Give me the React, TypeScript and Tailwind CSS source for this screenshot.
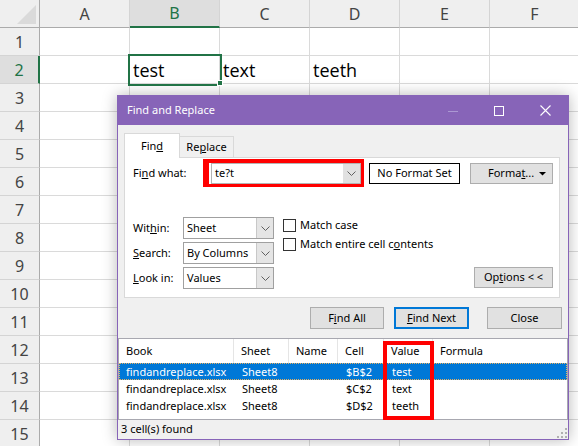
import React from 'react';

const COLS = ['A', 'B', 'C', 'D', 'E', 'F'];
const ROWS = Array.from({ length: 15 }, (_, i) => i + 1);
const DATA: Record<string, string> = { B2: 'test', C2: 'text', D2: 'teeth' };

function Chevron() {
  return (
    <svg width="9" height="5" viewBox="0 0 9 5">
      <polyline points="0.5,0.5 4.5,4.5 8.5,0.5" fill="none" stroke="#606060" strokeWidth="1" />
    </svg>
  );
}

function Select({ value }: { value: string }) {
  return (
    <div className="flex h-[22px] w-[91px] border border-[#a0a0a0] bg-white">
      <div className="flex flex-1 items-center pl-[3px]">{value}</div>
      <div className="flex w-[17px] items-center justify-center border-l border-[#c8c8c8] bg-[#e5e5e5]">
        <Chevron />
      </div>
    </div>
  );
}

function Btn({ children, w, focus }: { children: React.ReactNode; w: string; focus?: boolean }) {
  return (
    <div
      className={`flex h-[22px] items-center justify-center bg-[#e1e1e1] ${w} ${
        focus ? 'border-2 border-[#0078d7]' : 'border border-[#adadad]'
      }`}
    >
      {children}
    </div>
  );
}

function Checkbox({ label }: { label: React.ReactNode }) {
  return (
    <div className="flex h-[13px] items-center">
      <div className="h-[13px] w-[13px] border border-[#333333] bg-white" />
      <div className="ml-[4px]">{label}</div>
    </div>
  );
}

const resultRows = [
  { book: 'findandreplace.xlsx', sheet: 'Sheet8', cell: '$B$2', value: 'test' },
  { book: 'findandreplace.xlsx', sheet: 'Sheet8', cell: '$C$2', value: 'text' },
  { book: 'findandreplace.xlsx', sheet: 'Sheet8', cell: '$D$2', value: 'teeth' },
];

function Dialog() {
  return (
    <div className="absolute left-[117px] top-[95px] flex h-[345px] w-[452px] flex-col border border-[#8764b8] bg-[#f0f0f0] text-[11px] text-black shadow-[0_0_14px_rgba(0,0,0,0.28)] font-['Noto_Sans',sans-serif]">
      {/* title bar */}
      <div className="flex h-[29px] shrink-0 items-center bg-[#8764b8]">
        <div className="pl-[9px] text-[11px] text-white">Find and Replace</div>
        <div className="ml-auto flex h-full">
          <div className="flex w-[46px] items-center justify-center">
            <div className="mt-[1px] h-[1px] w-[10px] bg-[#ab98d3]" />
          </div>
          <div className="flex w-[46px] items-center justify-center">
            <div className="h-[10px] w-[10px] border border-white" />
          </div>
          <div className="flex w-[46px] items-center justify-center">
            <svg width="11" height="11" viewBox="0 0 11 11">
              <path d="M0.5 0.5 L10.5 10.5 M10.5 0.5 L0.5 10.5" stroke="white" strokeWidth="1.1" />
            </svg>
          </div>
        </div>
      </div>

      {/* body */}
      <div className="flex flex-1 flex-col">
        {/* tabs */}
        <div className="ml-[6px] mt-[8px] flex h-[25px] items-end">
          <div className="relative z-10 flex h-[25px] w-[56px] items-center justify-center border-l border-r border-t border-[#d9d9d9] bg-white">
            Fin<span className="underline">d</span>
          </div>
          <div className="flex h-[22px] w-[54px] items-center justify-center border-r border-t border-[#d9d9d9] bg-[#f0f0f0]">
            Re<span className="underline">p</span>lace
          </div>
        </div>

        {/* panel */}
        <div className="-mt-[1px] ml-[6px] flex h-[141px] w-[436px] flex-col border border-[#d9d9d9] bg-white pl-[8px] pr-[6px]">
          <div className="mt-[1px] flex h-[28px] items-center">
            <div className="w-[70px]">
              Fi<span className="underline">n</span>d what:
            </div>
            <div className="flex h-[28px] w-[161px] border-b-[3px] border-l-[6px] border-r-[3px] border-t-[4px] border-[#ff0000] bg-white pl-[2px]">
              <div className="flex flex-1 border border-[#b4b4b4]">
                <div className="flex flex-1 items-center pl-[3px]">te?t</div>
                <div className="flex w-[17px] items-center justify-center bg-[#e1e1e1]">
                  <Chevron />
                </div>
              </div>
            </div>
            <div className="ml-[5px] flex h-[21px] w-[91px] items-center justify-center border border-black bg-white">
              No Format Set
            </div>
            <div className="relative ml-[10px] flex h-[21px] w-[83px] items-center border border-[#adadad] bg-[#e1e1e1] pl-[17px]">
              Forma<span className="underline">t</span>...
              <svg className="absolute right-[6px] top-[8px]" width="7" height="4" viewBox="0 0 7 4">
                <polygon points="0,0 7,0 3.5,3.5" fill="#000" />
              </svg>
            </div>
          </div>

          <div className="mt-[30px] flex">
            <div className="flex flex-col gap-[3px]">
              <div className="flex h-[22px] items-center">
                <div className="w-[50px]">
                  Wit<span className="underline">h</span>in:
                </div>
                <Select value="Sheet" />
              </div>
              <div className="flex h-[22px] items-center">
                <div className="w-[50px]">
                  <span className="underline">S</span>earch:
                </div>
                <Select value="By Columns" />
              </div>
              <div className="flex h-[22px] items-center">
                <div className="w-[50px]">
                  <span className="underline">L</span>ook in:
                </div>
                <Select value="Values" />
              </div>
            </div>
            <div className="ml-[9px] mt-[2px] flex flex-col gap-[6px]">
              <Checkbox label={<>Match case</>} />
              <Checkbox
                label={
                  <>
                    Match entire cell c<span className="underline">o</span>ntents
                  </>
                }
              />
            </div>
            <div className="mb-[1px] ml-auto self-end">
              <div className="flex h-[21px] w-[79px] items-center justify-center border border-[#adadad] bg-[#e1e1e1]">
                Op<span className="underline">t</span>ions &lt; &lt;
              </div>
            </div>
          </div>
        </div>

        {/* buttons */}
        <div className="mt-[9px] flex justify-end pr-[6px]">
          <Btn w="w-[74px]">
            F<span className="underline">i</span>nd All
          </Btn>
          <div className="ml-[10px]">
            <Btn w="w-[75px]" focus>
              <span className="underline">F</span>ind Next
            </Btn>
          </div>
          <div className="ml-[18px]">
            <Btn w="w-[75px]">Close</Btn>
          </div>
        </div>

        {/* results list */}
        <div className="relative mt-[9px] h-[82px] border border-[#a8a8b0] bg-white">
          <div className="grid h-[24px] grid-cols-[115px_55px_49px_46px_49px_1fr]">
            {['Book', 'Sheet', 'Name', 'Cell', 'Value', 'Formula'].map((h, i) => (
              <div
                key={h}
                className={`flex items-center pl-[7px] ${i < 5 ? 'border-r border-[#e5e5e5]' : ''}`}
              >
                {h}
              </div>
            ))}
          </div>
          {resultRows.map((r, i) => (
            <div
              key={r.cell}
              className={`grid h-[17px] grid-cols-[115px_55px_49px_46px_49px_1fr] ${
                i === 0 ? 'border border-dotted border-[#e8b060] bg-[#0078d7] text-white' : 'border border-transparent'
              }`}
            >
              <div className="flex items-center pl-[6px]">{r.book}</div>
              <div className="flex items-center pl-[7px]">{r.sheet}</div>
              <div className="flex items-center pl-[7px]" />
              <div className="flex items-center pl-[7px]">{r.cell}</div>
              <div className="flex items-center pl-[7px]">{r.value}</div>
              <div />
            </div>
          ))}
          <div className="absolute left-[264px] top-[2px] h-[79px] w-[51px] border-4 border-[#ff0000]" />
        </div>

        {/* status bar */}
        <div className="relative flex flex-1 items-center pl-[3px]">
          3 cell(s) found
          <svg className="absolute bottom-[1px] right-[1px]" width="10" height="10" viewBox="0 0 10 10">
            <rect x="8" y="0" width="2" height="2" fill="#b0b0b0" />
            <rect x="4" y="4" width="2" height="2" fill="#b0b0b0" />
            <rect x="8" y="4" width="2" height="2" fill="#b0b0b0" />
            <rect x="0" y="8" width="2" height="2" fill="#b0b0b0" />
            <rect x="4" y="8" width="2" height="2" fill="#b0b0b0" />
            <rect x="8" y="8" width="2" height="2" fill="#b0b0b0" />
          </svg>
        </div>
      </div>
    </div>
  );
}

export default function App() {
  return (
    <div className="relative h-[446px] w-[578px] overflow-hidden bg-white font-['Noto_Sans',sans-serif]">
      {/* column headers */}
      <div className="flex h-[28px]">
        <div className="relative h-[28px] w-[40px] shrink-0 border-b border-r border-[#ababab] bg-[#efefef]">
          <svg className="absolute left-[16px] top-[5px]" width="21" height="20" viewBox="0 0 21 20">
            <polygon points="20,0 20,19 1,19" fill="#dadada" />
          </svg>
        </div>
        {COLS.map((c) => (
          <div
            key={c}
            className={`flex h-[28px] w-[90px] shrink-0 items-center justify-center border-r border-r-[#d4d4d4] text-[16px] ${
              c === 'B'
                ? 'border-b-2 border-b-[#217346] bg-[#dedede] text-[#217346]'
                : 'border-b border-b-[#ababab] bg-[#efefef] text-[#444444]'
            }`}
          >
            {c}
          </div>
        ))}
      </div>

      {ROWS.map((r) => (
        <div key={r} className="flex h-[28px]">
          <div
            className={`flex h-[28px] w-[40px] shrink-0 items-center justify-center border-b border-b-[#d4d4d4] text-[16px] ${
              r === 2
                ? 'border-r-2 border-r-[#217346] bg-[#dedede] text-[#217346]'
                : 'border-r border-r-[#ababab] bg-[#efefef] text-[#444444]'
            }`}
          >
            {r}
          </div>
          {COLS.map((c) => (
            <div
              key={c}
              className="relative flex h-[28px] w-[90px] shrink-0 items-end border-b border-r border-[#dadada] pb-[3px] pl-[3px] text-[18px] leading-[20px] text-black font-['Open_Sans',sans-serif]"
            >
              {DATA[c + r]}
              {c === 'B' && r === 2 && (
                <div className="absolute -left-[2px] -top-[2px] z-[5] h-[32px] w-[94px] border-2 border-[#217346]">
                  <div className="absolute -bottom-[2px] -right-[3px] h-[6px] w-[6px] border border-white bg-[#217346]" />
                </div>
              )}
            </div>
          ))}
        </div>
      ))}

      <Dialog />
    </div>
  );
}
